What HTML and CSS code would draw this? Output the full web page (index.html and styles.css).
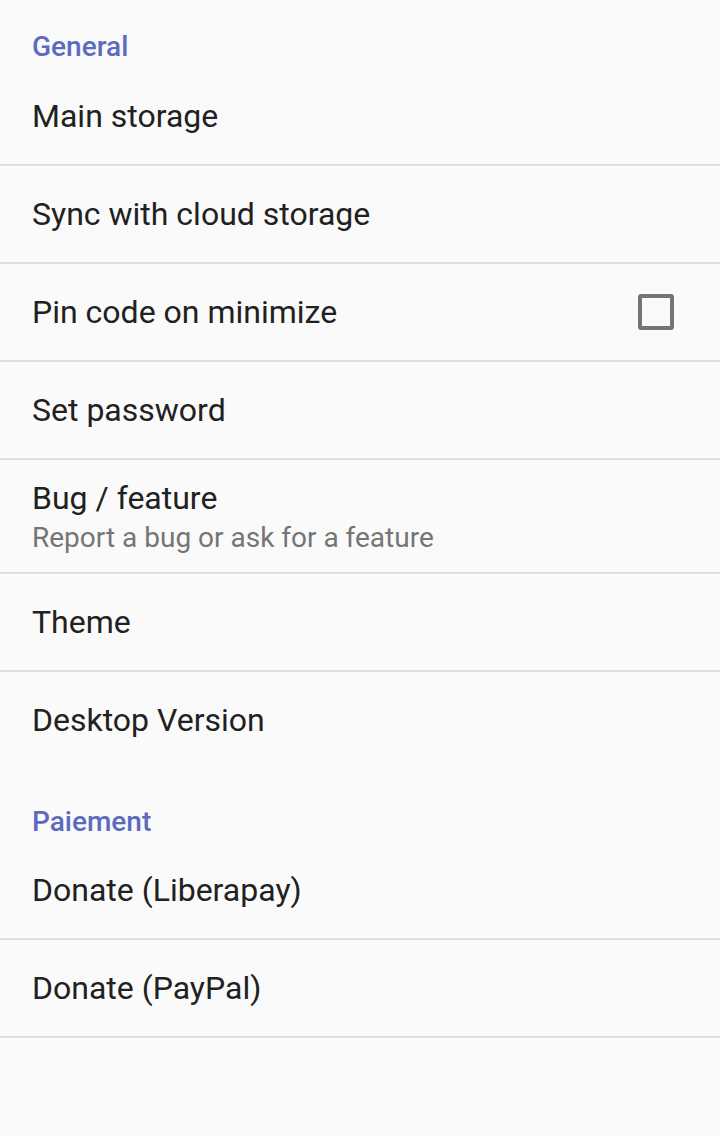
FILE: index.html
```html
<!DOCTYPE html>
<html lang="en">

<head>
    <meta charset="UTF-8">
    <meta name="viewport" content="width=device-width, initial-scale=1.0">
    <title>Settings</title>

    <link rel="stylesheet" href="styles.css">
</head>

<body>

    <!-- General -->
    <div class="category first">General</div>
    <div class="pref">
        <div class="pref-text">
            <div class="title">Main storage</div>
        </div>
    </div>
    <div class="pref">
        <div class="pref-text">
            <div class="title">Sync with cloud storage</div>
        </div>
    </div>
    <div class="pref">
        <div class="pref-text">
            <div class="title">Pin code on minimize</div>
        </div>
        <span class="checkbox"></span>
    </div>
    <div class="pref">
        <div class="pref-text">
            <div class="title">Set password</div>
        </div>
    </div>
    <div class="pref two-line">
        <div class="pref-text">
            <div class="title">Bug / feature</div>
            <div class="summary">Report a bug or ask for a feature</div>
        </div>
    </div>
    <div class="pref">
        <div class="pref-text">
            <div class="title">Theme</div>
        </div>
    </div>
    <div class="pref last">
        <div class="pref-text">
            <div class="title">Desktop Version</div>
        </div>
    </div>

    <!-- Paiement -->
    <div class="category">Paiement</div>
    <div class="pref">
        <div class="pref-text">
            <div class="title">Donate (Liberapay)</div>
        </div>
    </div>
    <div class="pref">
        <div class="pref-text">
            <div class="title">Donate (PayPal)</div>
        </div>
    </div>

</body>
</html>
```

FILE: styles.css
```css
html,
body {
    height: 100%;
}

body {
    margin: 0;
    background: #fafafa;
    font-family: Roboto, "Liberation Sans", sans-serif;
    color: #212121;
}

.category {
    padding: 34px 32px 0;
    line-height: 40px;
    font-size: 28px;
    font-weight: 500;
    color: #5c6bc0;
}

.category.first {
    padding-top: 27px;
    padding-bottom: 1px;
}

.pref {
    display: flex;
    align-items: center;
    height: 96px;
    padding: 0 46px 0 32px;
    border-bottom: 2px solid #dedede;
}

.pref.last {
    border-bottom: none;
}

.pref.two-line {
    height: 114px;
    box-sizing: border-box;
    padding-top: 19px;
    padding-bottom: 15px;
}

.pref-text {
    flex: 1;
}

.title {
    font-size: 32px;
    line-height: 40px;
}

.summary {
    font-size: 28px;
    line-height: 40px;
    color: #757575;
}

.checkbox {
    width: 28px;
    height: 28px;
    border: 4px solid #757575;
    border-radius: 3px;
}
```
